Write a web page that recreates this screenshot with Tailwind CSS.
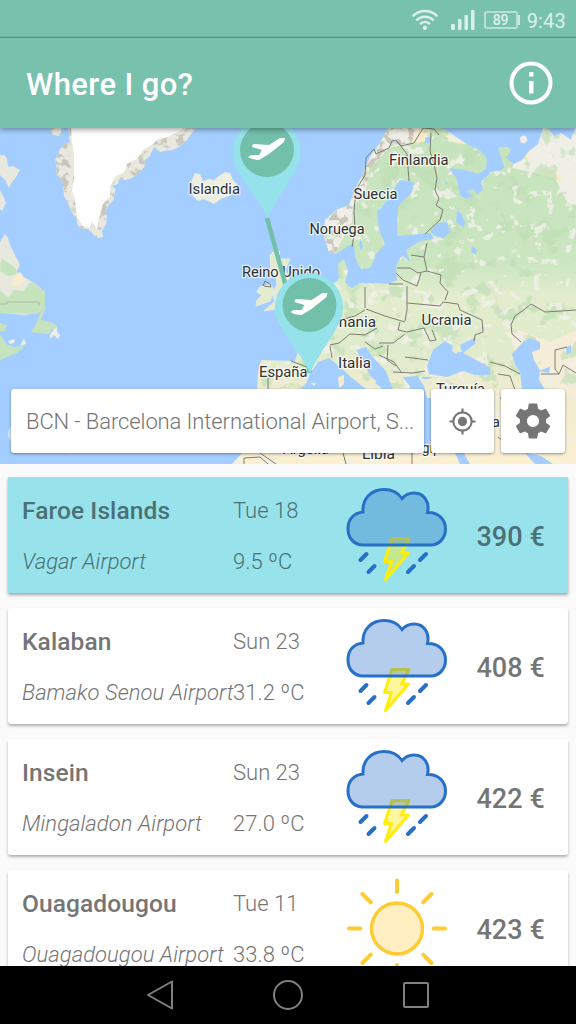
<!DOCTYPE html>
<html lang="en">
<head>
<meta charset="utf-8">
<title>Where I go?</title>
<script src="https://cdn.jsdelivr.net/npm/@tailwindcss/browser@4"></script>
</head>
<body class="w-[576px] h-[1024px] overflow-hidden bg-[#fafafa] font-['Roboto',sans-serif] text-[#757575]">
<svg class="hidden">
  <symbol id="storm" viewBox="0 0 104 98">
    <g fill="none" stroke-linecap="round" stroke-linejoin="round">
      <path d="M47 51.500H64L56.500 66H63.500L40.500 92.500L46.500 74.500H39.500Z" fill="#ffed10" fill-opacity=".42" stroke="#ffed0a" stroke-width="3"/>
      <path d="M18 58C9 58 3 51 3 42C3 32 9 26 18 25C17 11 27 2.500 39 2.500C47 2.500 53 5.500 57 11.500C60 8 64 6 69 6C79 6 85 15 82.500 25.500C93 25 100.500 32 100.500 42C100.500 51 94 58 86 58Z" fill="#2a71c9" fill-opacity=".35" stroke="#2770c8" stroke-width="3" stroke-linejoin="miter"/>
      <path d="M15.500 73L21.500 67M23.500 85L29.500 79M63 85L69 79M75 73L81 67" stroke="#2770c8" stroke-width="4"/>
    </g>
  </symbol>
  <symbol id="sun" viewBox="0 0 104 104">
    <circle cx="52" cy="51.500" r="25.500" fill="#ffefc2" stroke="#ffcb32" stroke-width="3.400"/>
    <path d="M52 3.500V15M52 88V99.500M4 51.500H15.500M88.500 51.500H100M17.500 17L25.800 25.300M86.500 17L78.200 25.300M17.500 86L25.800 77.700M86.500 86L78.200 77.700" stroke="#ffcb32" stroke-width="4" stroke-linecap="round"/>
  </symbol>
</svg>

<div class="flex h-full flex-col">
  <div class="flex h-[38px] shrink-0 items-center justify-end bg-[#78c2ad] pr-[10px] text-[#dcf0ea]">
    <svg class="mr-[12px] mt-[2px] h-[22px] w-[28px]" viewBox="0 0 28 22" fill="none" stroke="currentColor" stroke-width="2.400"><path d="M1.500 7.500C8.500 .2 19.500 .2 26.500 7.500M5.300 11.500C10.500 6.500 17.500 6.500 22.700 11.500M9 15.200C12 12.300 16 12.300 19 15.200"/><circle cx="14" cy="18.800" r="2.200" fill="currentColor" stroke="none"/></svg>
    <svg class="mr-[9px] mt-[1px] h-[20px] w-[24px]" viewBox="0 0 24 20" fill="currentColor"><rect y="14" width="4" height="6" rx="1"/><rect x="7" y="9" width="3.500" height="11" rx="1"/><rect x="13.500" y="5" width="3.500" height="15" rx="1"/><rect x="20" width="3.500" height="20" rx="1"/></svg>
    <div class="mt-[2px] flex h-[18px] w-[34px] items-center justify-center rounded-[3px] border-2 border-[#b9dfd4] text-[14px] font-medium">89</div>
    <div class="mr-[7px] mt-[2px] h-[10px] w-[2px] bg-[#cbe8df]"></div>
    <div class="mt-[3px] text-[20px] tracking-[0.2px]">9:43</div>
  </div>
  <div class="z-10 flex h-[90px] shrink-0 items-center justify-between bg-[#78c2ad] pl-[26px] pr-[23px] text-white shadow-[0_-1px_1px_rgba(0,0,0,.22),0_2px_5px_rgba(0,0,0,.35)]">
    <h1 class="pt-[5px] text-[31px] font-medium tracking-[0.4px]">Where I go?</h1>
    <svg class="h-[44px] w-[44px]" viewBox="0 0 44 44"><circle cx="22" cy="22" r="19.500" fill="none" stroke="#fff" stroke-width="4"/><path fill="#fff" d="M20 11h4.500v4.500H20zM20 20h4.500v12.500H20z"/></svg>
  </div>

  <div class="relative h-[336px] shrink-0 overflow-hidden">
    <svg class="block h-[336px] w-[576px]" viewBox="0 128 576 336">
      <defs>
        <filter id="specks" x="0" y="0" width="100%" height="100%" color-interpolation-filters="sRGB">
          <feTurbulence type="fractalNoise" baseFrequency=".09" numOctaves="5" seed="8"/>
          <feColorMatrix values="0 0 0 0 .945  0 0 0 0 .94  0 0 0 0 .91  14 0 0 0 -8.700"/>
        </filter>
        <filter id="woods" x="0" y="0" width="100%" height="100%" color-interpolation-filters="sRGB">
          <feTurbulence type="fractalNoise" baseFrequency=".05" numOctaves="5" seed="21"/>
          <feColorMatrix values="0 0 0 0 .75  0 0 0 0 .87  0 0 0 0 .71  12 0 0 0 -6.800"/>
        </filter>
        <filter id="relief" x="0" y="0" width="100%" height="100%" color-interpolation-filters="sRGB">
          <feTurbulence type="fractalNoise" baseFrequency=".13" numOctaves="4" seed="3"/>
          <feColorMatrix values="0 0 0 0 .79  0 0 0 0 .78  0 0 0 0 .74  9 0 0 0 -4.700"/>
          <feComposite in2="SourceGraphic" operator="in"/>
        </filter>
        <linearGradient id="ground" x1="0" y1="128" x2="0" y2="464" gradientUnits="userSpaceOnUse">
          <stop offset="0" stop-color="#c5e3bd"/><stop offset=".4" stop-color="#cbe6c0"/><stop offset=".5" stop-color="#e3edcd"/><stop offset=".66" stop-color="#dfebcc"/><stop offset=".78" stop-color="#f0ecd0"/><stop offset="1" stop-color="#fbf0d0"/>
        </linearGradient>
        <clipPath id="europe">
          <path d="M388 128L380 143L370 157L362 175L355 190L349 205L336 210L325 220L324 236L329 252L336 254L346 247L354 243L355 257L361 269L370 268L373 262L376 254L385 244L379 230L377 212L386 202L400 180L414 182L412 192L398 207L397 236L430 233L434 239L420 241L406 250L410 262L402 255L396 266L397 280L389 284L376 283L360 283L352 288L345 283L348 271L344 259L338 264L339 278L337 281L326 286L316 289L308 300L296 309L280 322L285 330L294 339L298 351L295 361L261 360L258 372L257 392L260 404L278 410L296 401L299 391L307 382L310 373L318 362L329 358L340 367L352 378L366 389L378 390L384 387L371 377L356 350L366 347L372 356L386 371L393 390L404 402L410 390L411 378L418 377L424 386L427 398L466 402L467 417L460 438L452 449L430 448L400 444L370 447L325 440L285 441L244 451L232 464H576V128H561L573 133L571 140L560 128H388Z"/>
        </clipPath>
      </defs>
      <rect y="128" width="576" height="336" fill="#a3ceff"/>
      <g fill="#e9e8df">
        <path id="greenland" d="M50 128L53 135L60 136L62 128ZM68 128L70 142L65 144L60 149L58 155L55 160L57 169L56 174L62 180L63 185L64 196L68 203L72 213L76 218L78 226L83 229L88 229L94 235L98 238L103 237L102 231L106 224L107 216L105 211L109 206L106 207L114 200L114 196L116 190L112 186L118 184L119 179L126 180L132 178L140 172L145 166L145 160L150 156L154 147L160 152L165 151L172 150L179 147L186 141L196 128Z"/>
        <path d="M0 155L4 155L7 158L8 167L13 166L20 170L16 177L12 182L9 188L5 180L0 175ZM0 190L4 198L6 203L2 211L0 210ZM0 242L5 234L8 238L11 247L16 257L20 265L16 273L22 277L28 279L37 285L45 292L45 305L40 312L26 315L0 313Z"/>
        <path d="M191 182L195 173L200 174L203 181L209 179L214 180L219 176L225 172L230 173L233 180L237 184L235 190L229 196L221 199L214 204L204 199L198 201L192 195L199 191Z" fill="#edeee0"/>
      </g>
      <use href="#greenland" filter="url(#relief)"/>
      <path d="M71 128L72 142L74 156V178L72 190L75 200L77 218L83 226L90 228L92 221L97 230L99 218L103 204L110 196L110 187L116 176L125 172L127 164L138 158L143 150L153 144L158 139L165 138L182 130V128Z" fill="#fefefe"/>
      <g fill="#c5e3bd"><path d="M0 290L8 298L14 290L24 291L31 281L45 292V305L38 314L0 313ZM1 258L14 267L19 274L8 276L0 271ZM45 306L40 314L36 324L31 332L38 333L49 334L52 329L55 331L57 326L53 323L41 320L46 307ZM0 323L7 325L5 331H0ZM0 334L7 345L15 347L25 346L17 353L0 360Z"/></g>
      <path d="M50 335L54 329L57 327V332L60 335L58 339L54 335L50 339ZM8 341L15 339L14 343L10 344ZM20 346L24 338L26 344Z" fill="#eeeee6"/>
      <path d="M13 276L20 272L25 279L19 287L12 285Z" fill="#f7edce"/>
      <path d="M0 304H7V302H39V306" fill="none" stroke="#a6b5a0" stroke-width=".8"/>

      <path fill="#e3ecce" stroke="#e9eadf" stroke-width="1" d="M270 255L277 249L280 252L278 259L290 259L285 270L290 281L298 289L300 298L292 304L277 309L264 311L275 301L272 293L277 285L276 277L271 273ZM260 287L270 284L274 290L270 301L256 306L257 300L262 295L257 292Z"/>
      <path d="M263 286L265 281L270 284L271 287L264 286" fill="none" stroke="#77796f"/>
      <g clip-path="url(#europe)">
        <rect x="220" y="128" width="356" height="336" fill="url(#ground)"/>
        <path d="M388 128L320 220L324 252L334 256L342 240L352 222L354 206L366 190L370 168L388 149L410 142L425 128Z" fill="#eeeee6"/>
        <path d="M530 128L512 168L535 173L555 178L566 200L576 205V128Z" fill="#efeee7"/>
        <path d="M518 330L505 333L512 340L517 358L520 374L576 400V330L550 342Z" fill="#f5edd8"/>
        <path d="M405 130L414 145L427 140L430 128ZM440 132L455 143L475 145L468 135ZM520 152L532 156L522 165ZM535 168L560 174L562 183Z" fill="#faeccb"/>
        <rect x="220" y="128" width="356" height="260" filter="url(#woods)" opacity=".65"/>
        <rect x="220" y="128" width="356" height="336" filter="url(#specks)" opacity=".85"/>
        <path d="M388 128L320 220L324 252L334 256L342 240L352 222L354 206L366 190L370 168L388 149L410 142L425 128Z" filter="url(#relief)"/>
      </g>

      <g fill="#a3ceff">
        <path d="M442 128H576L570 139L561 133L554 136L548 128H543L538 144L529 151L522 160L514 164L506 158L511 151L508 147L498 147L504 167L502 170L491 172L481 182L483 190L477 194L473 189L467 191L473 196L466 199L460 195L457 179L449 168L465 170L478 174L486 169L487 159L481 151L467 144L459 139L449 132Z"/>
        <path d="M457 211L461 213L465 222L464 228L456 222ZM438 223L447 222L450 232L444 238L435 236L430 231ZM472 246L477 250L476 255L471 252ZM425 138L432 136L431 142L425 144ZM444 180L448 183L446 184ZM361 239L363 247L361 251L359 244ZM383 248L385 246L387 254L384 259Z"/>
        <path d="M427 366L433 350L445 341L453 346L454 352L462 352L460 345L476 337L475 344L463 353L478 361L490 368L490 375H475L463 371L447 377L429 374Z"/>
        <path d="M512 354L523 342L530 338L540 342L540 349L532 352L534 360L540 371L539 380L545 390H522L520 371L515 365Z"/>
        <path d="M422 377H433L428 379L422 379ZM403 377L418 376L422 388H411ZM566 348L571 345L571 353L567 354ZM538 371L550 367L549 373ZM424 398H431V432L424 430ZM455 453L463 452L470 464H460ZM525 453L541 456L553 464H535ZM375 383L385 375L393 388L386 391Z"/>
      </g>
      <path d="M520 138C522 133 528 136 527 141C524 145 520 144 520 138Z" fill="#eeeee6"/>
      <path d="M453 346L460 344L461 349L456 354L452 351Z" fill="#e6eccd"/>
      <path d="M338 377L344 375L344 384L339 388ZM311 383L316 383L314 386Z" fill="#f4ebcc"/>
      <g fill="none" stroke="#7c7e75" stroke-width="1" stroke-linejoin="round">
        <path d="M352 247L355 230L354 211L356 190L365 175L366 158L374 149L376 154L389 148L392 141L396 140L401 146L414 143L423 128L434 129L439 135M396 140L407 154L409 181M431 133L430 151L434 164L437 178L435 190L439 199L436 205L443 210L440 220L425 234M427 243L424 257L411 255M424 257L427 271L418 273L410 268H397M427 271L441 275L440 283L448 292L445 300M396 273L403 280L417 286L421 273M407 286L407 310L405 321M389 284H403M365 287V308M365 310L355 316L340 320M407 303L440 306L443 302L458 304L460 310L482 320L483 332L475 335L474 341M366 309L385 316L405 322M400 322L398 330L407 332L424 328L430 341L436 340L432 330M405 334L393 343L379 343M377 328L365 335L350 334L339 343L330 345M365 342L375 349L383 346M388 345L387 360L396 366M379 355L394 362L402 373M405 357L428 360M393 372L413 373L425 371M264 371H268V392M291 361L307 367M330 346L332 358M521 342L512 334L511 325L515 316L525 309L531 304L545 312L576 310M490 362L505 366L520 374M498 374L510 376L515 390M500 398H512M541 374H559L555 369V350L567 347M559 374L563 365L576 373M244 464V458L260 457L268 464M343 453L346 464M412 453V464M498 437L510 446M260 453L276 464"/>
      </g>
      <g font-family="Roboto, sans-serif" font-size="15" fill="#303030" stroke="#fff" stroke-opacity=".75" stroke-width="2.500" stroke-linejoin="round" paint-order="stroke">
        <text x="188.500" y="193.500" textLength="51.500" lengthAdjust="spacingAndGlyphs">Islandia</text><text x="389" y="165" textLength="59.500" lengthAdjust="spacingAndGlyphs">Finlandia</text><text x="353.500" y="199" textLength="44" lengthAdjust="spacingAndGlyphs">Suecia</text><text x="309.500" y="234" textLength="55" lengthAdjust="spacingAndGlyphs">Noruega</text><text x="242" y="277" textLength="78" lengthAdjust="spacingAndGlyphs">Reino Unido</text><text x="312" y="327" textLength="64" lengthAdjust="spacingAndGlyphs">Alemania</text><text x="421.500" y="325" textLength="50" lengthAdjust="spacingAndGlyphs">Ucrania</text><text x="338" y="368" textLength="33" lengthAdjust="spacingAndGlyphs">Italia</text><text x="259" y="377" textLength="48.500" lengthAdjust="spacingAndGlyphs">España</text><text x="436" y="393.500" textLength="49" lengthAdjust="spacingAndGlyphs">Turquía</text><text x="283" y="454" textLength="46" lengthAdjust="spacingAndGlyphs">Argelia</text><text x="362" y="459" textLength="33" lengthAdjust="spacingAndGlyphs">Libia</text><text x="414" y="452.500" textLength="39" lengthAdjust="spacingAndGlyphs">Egipto</text><text x="475" y="427" textLength="25">Siria</text>
      </g>
      <path d="M267 218L310 373" stroke="#73c0aa" stroke-width="4.500"/>
      <g id="pin">
        <path d="M234 162A34 34 0 1 1 299 162C295 176 276 199 267.500 218C259 199 238 176 234 162Z" fill="#96e2ea"/>
        <circle cx="267" cy="150" r="27" fill="#73c0aa"/>
        <path d="M248 157L251 155L259 155L262 150L252 147L253 144L269 145L280 138L285 138L284 142L269 154L259 160Q252 160 248 157Z" fill="#fff"/>
      </g>
      <use href="#pin" x="42.500" y="155"/>
      <circle cx="19" cy="434" r="11" fill="#d3e7fb"/>
      <circle cx="70" cy="449" r="5" fill="#dcd9d4"/>
    </svg>
    <div class="absolute left-[11px] top-[261px] flex gap-[7px]">
      <div class="flex h-[64px] w-[413px] items-center rounded-[3px] bg-white pl-[15px] text-[22px] font-light tracking-[-0.1px] whitespace-nowrap text-[#757575] shadow-[0_1px_3px_rgba(0,0,0,.4)]">BCN - Barcelona International Airport, S...</div>
      <div class="flex h-[64px] w-[63px] items-center justify-center rounded-[3px] bg-white shadow-[0_1px_3px_rgba(0,0,0,.4)]">
        <svg class="size-[27px]" viewBox="0 0 28 28"><g fill="none" stroke="#757575" stroke-width="2.200"><circle cx="14" cy="14" r="9.500"/><path d="M14 .5V5M14 23V27.500M.5 14H5M23 14H27.500"/></g><circle cx="14" cy="14" r="4.800" fill="#757575"/></svg>
      </div>
      <div class="flex size-[64px] items-center justify-center rounded-[3px] bg-white shadow-[0_1px_3px_rgba(0,0,0,.4)]">
        <svg class="size-[42px]" viewBox="0 0 24 24" fill="#757575"><path d="M19.430 12.980c.04-.32.070-.64.070-.98s-.03-.66-.07-.98l2.110-1.650c.19-.15.240-.42.120-.64l-2-3.460c-.12-.22-.39-.3-.61-.22l-2.490 1c-.52-.4-1.080-.73-1.690-.98l-.38-2.650C14.460 2.180 14.250 2 14 2h-4c-.25 0-.46.180-.49.420l-.38 2.650c-.61.250-1.170.590-1.690.980l-2.490-1c-.23-.09-.49 0-.61.220l-2 3.460c-.13.220-.07.490.12.640l2.110 1.650c-.04.320-.07.650-.07.980s.03.660.070.980l-2.110 1.650c-.19.150-.24.420-.12.640l2 3.460c.12.220.39.300.61.220l2.490-1c.52.400 1.080.730 1.690.980l.38 2.650c.03.240.24.420.49.420h4c.25 0 .46-.18.490-.42l.38-2.650c.61-.25 1.170-.59 1.690-.98l2.490 1c.23.090.49 0 .61-.22l2-3.460c.12-.22.070-.49-.12-.64zM12 15.500a3.500 3.500 0 1 1 0-7 3.500 3.500 0 0 1 0 7z"/></svg>
      </div>
    </div>
  </div>

  <div class="flex h-[502px] shrink-0 flex-col gap-[15px] overflow-hidden px-2 pt-[13px]">
    <div class="grid h-[116px] shrink-0 grid-cols-[211px_112px_1fr_auto] items-center bg-[#98e3eb] pl-[14px] pr-[23px] pt-[2px] text-[#4b7075] shadow-[0_2px_3px_rgba(0,0,0,.35)]">
      <div class="flex flex-col gap-[23px] whitespace-nowrap leading-[28px]"><b class="text-[24.500px] font-medium tracking-[0.1px]">Faroe Islands</b><i class="text-[22px] font-light tracking-[0.05px]">Vagar Airport</i></div>
      <div class="flex flex-col gap-[23px] text-[22px] leading-[28px] font-light"><span>Tue 18</span><span>9.5 ºC</span></div>
      <svg class="h-[98px] w-[104px]"><use href="#storm"/></svg>
      <div class="pt-[2px] text-[27px] font-medium tracking-[0.1px]">390 €</div>
    </div>
    <div class="grid h-[116px] shrink-0 grid-cols-[211px_112px_1fr_auto] items-center rounded-[3px] bg-white pl-[14px] pr-[23px] pt-[2px] shadow-[0_2px_3px_rgba(0,0,0,.3)]">
      <div class="flex flex-col gap-[23px] whitespace-nowrap leading-[28px]"><b class="text-[24.500px] font-medium tracking-[0.1px]">Kalaban</b><i class="text-[22px] font-light tracking-[0.05px]">Bamako Senou Airport</i></div>
      <div class="flex flex-col gap-[23px] text-[22px] leading-[28px] font-light"><span>Sun 23</span><span>31.2 ºC</span></div>
      <svg class="h-[98px] w-[104px]"><use href="#storm"/></svg>
      <div class="pt-[2px] text-[27px] font-medium tracking-[0.1px]">408 €</div>
    </div>
    <div class="grid h-[116px] shrink-0 grid-cols-[211px_112px_1fr_auto] items-center rounded-[3px] bg-white pl-[14px] pr-[23px] pt-[2px] shadow-[0_2px_3px_rgba(0,0,0,.3)]">
      <div class="flex flex-col gap-[23px] whitespace-nowrap leading-[28px]"><b class="text-[24.500px] font-medium tracking-[0.1px]">Insein</b><i class="text-[22px] font-light tracking-[0.05px]">Mingaladon Airport</i></div>
      <div class="flex flex-col gap-[23px] text-[22px] leading-[28px] font-light"><span>Sun 23</span><span>27.0 ºC</span></div>
      <svg class="h-[98px] w-[104px]"><use href="#storm"/></svg>
      <div class="pt-[2px] text-[27px] font-medium tracking-[0.1px]">422 €</div>
    </div>
    <div class="grid h-[116px] shrink-0 grid-cols-[211px_112px_1fr_auto] items-center rounded-[3px] bg-white pl-[14px] pr-[23px] pt-[2px] shadow-[0_2px_3px_rgba(0,0,0,.3)]">
      <div class="flex flex-col gap-[23px] whitespace-nowrap leading-[28px]"><b class="text-[24.500px] font-medium tracking-[0.1px]">Ouagadougou</b><i class="text-[22px] font-light tracking-[0.05px]">Ouagadougou Airport</i></div>
      <div class="flex flex-col gap-[23px] text-[22px] leading-[28px] font-light"><span>Tue 11</span><span>33.8 ºC</span></div>
      <svg class="h-[104px] w-[104px]"><use href="#sun"/></svg>
      <div class="pt-[2px] text-[27px] font-medium tracking-[0.1px]">423 €</div>
    </div>
  </div>

  <div class="flex h-[58px] shrink-0 items-center justify-center gap-[100px] bg-black">
    <svg class="h-[30px] w-[26px]" viewBox="0 0 26 30" fill="none" stroke="#808080" stroke-width="2" stroke-linejoin="round"><path d="M1 15L25 1.500V28.500Z"/></svg>
    <svg class="size-[30px]" viewBox="0 0 30 30" fill="none" stroke="#808080" stroke-width="2"><circle cx="15" cy="15" r="14"/></svg>
    <svg class="size-[26px]" viewBox="0 0 26 26" fill="none" stroke="#808080" stroke-width="2"><rect x="1" y="1" width="24" height="24" rx="1"/></svg>
  </div>
</div>
</body>
</html>
